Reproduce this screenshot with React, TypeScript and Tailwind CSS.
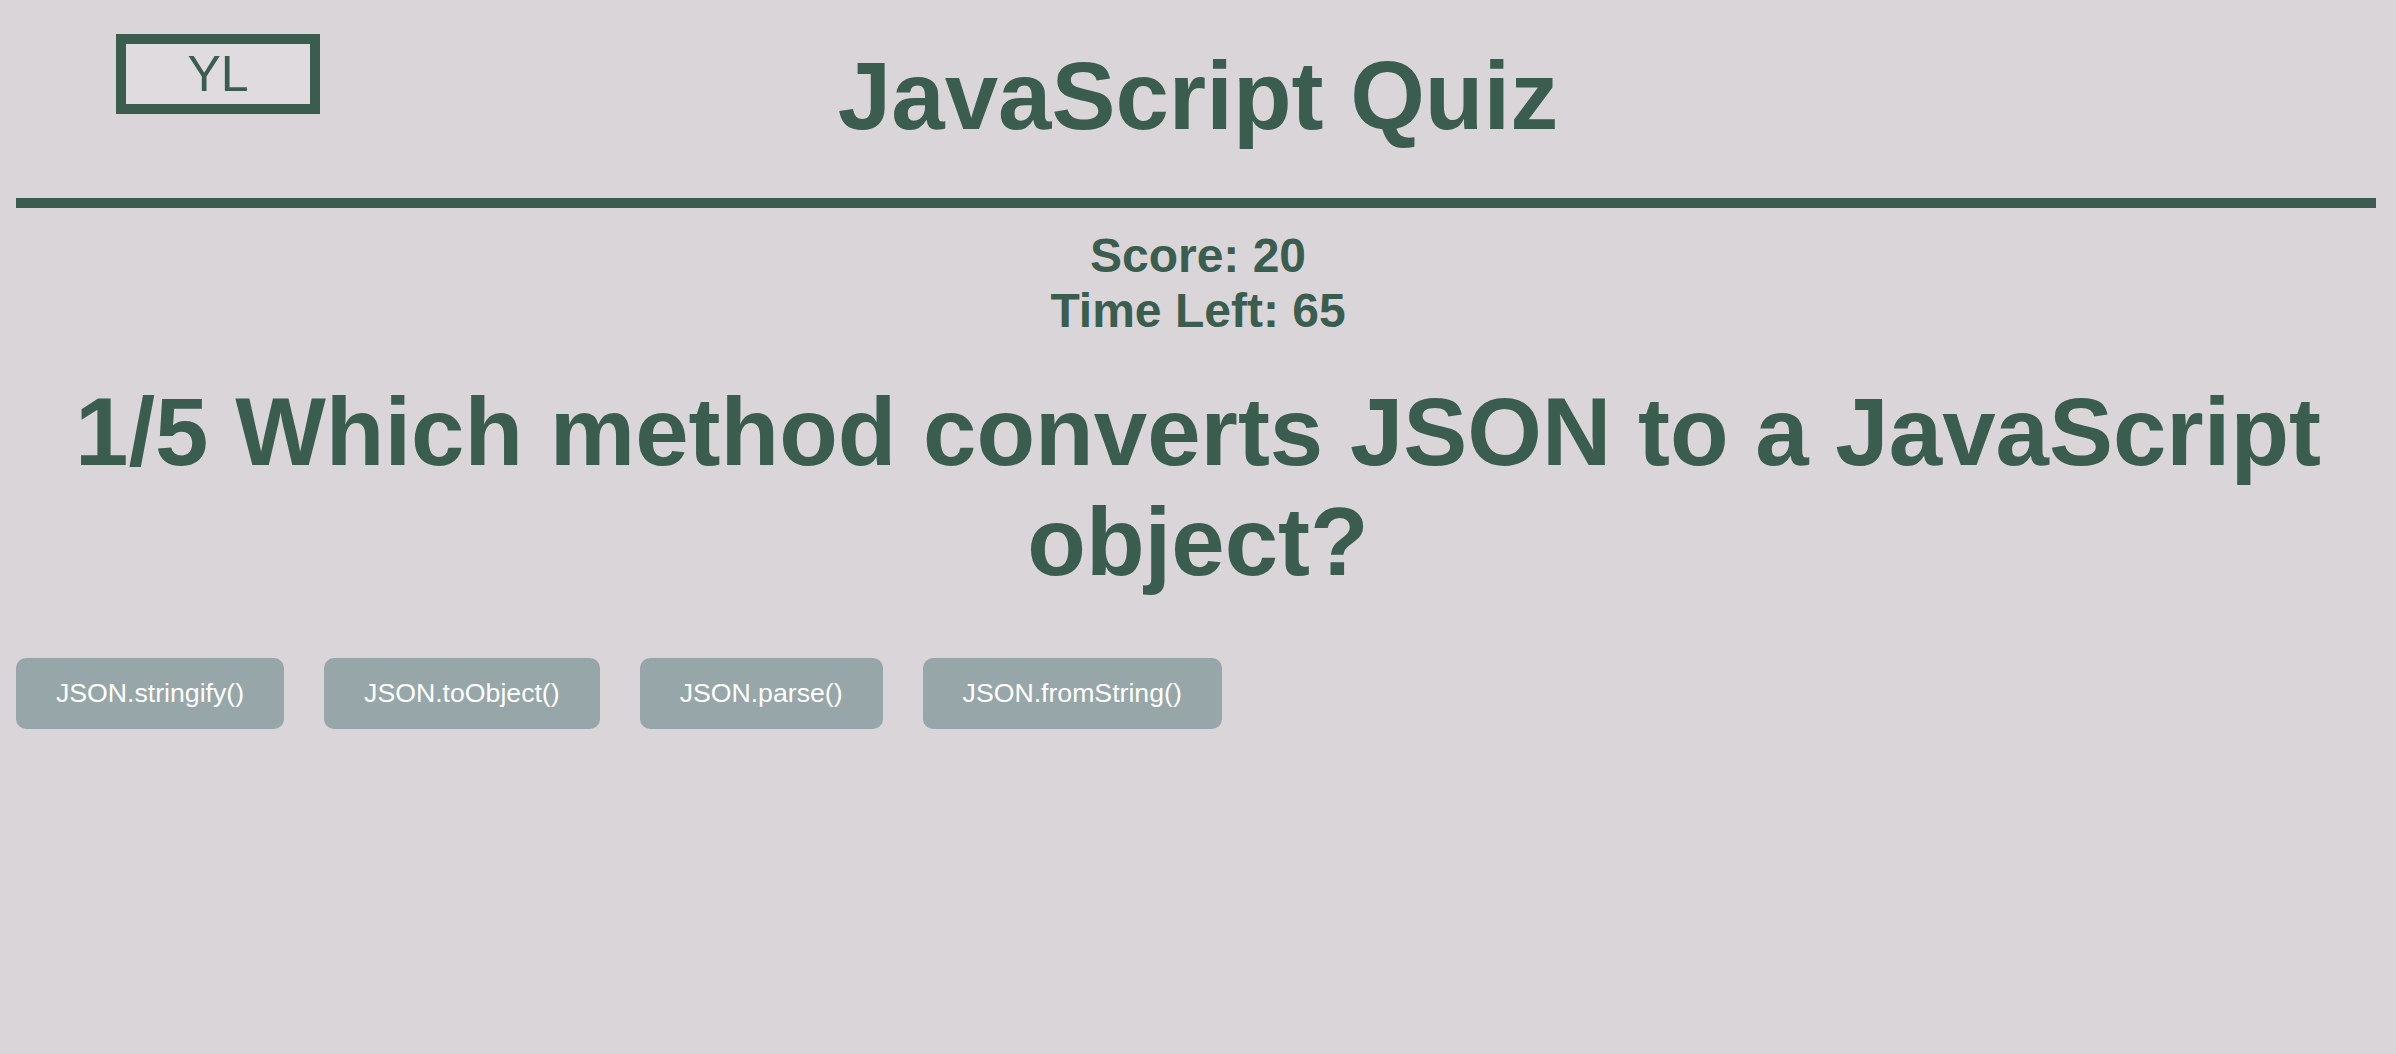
import { useState } from 'react';

const answers = ['JSON.stringify()', 'JSON.toObject()', 'JSON.parse()', 'JSON.fromString()'];

export default function App() {
  const [selected, setSelected] = useState<string | null>(null);

  return (
    <div
      className="min-h-screen bg-[#dad5d9] px-4 text-[#3a5d4f]"
      style={{ fontFamily: '"Liberation Sans", Arial, sans-serif' }}
    >
      <header className="grid grid-cols-[1fr_auto_1fr] items-start">
        <div className="mt-[34px] ml-[100px] flex h-[80px] w-[204px] items-center justify-center border-[10px] border-[#3a5d4f] bg-[#dfdbde]">
          <span className="text-[50px] leading-none">YL</span>
        </div>
        <h1 className="mt-[41px] text-center text-[96px] font-bold leading-[110px]">JavaScript Quiz</h1>
        <div />
      </header>

      <div className="mt-[47px] mr-1 h-[10px] bg-[#3a5d4f]" />

      <div className="mt-[20px] text-center text-[48px] font-bold leading-[55px]">
        <p>Score: 20</p>
        <p>Time Left: 65</p>
      </div>

      <h2 className="mt-[39px] text-center text-[96px] font-bold leading-[110px]">
        1/5 Which method converts JSON to a JavaScript object?
      </h2>

      <div className="mt-[61px] flex gap-10">
        {answers.map((a) => (
          <button
            key={a}
            onClick={() => setSelected(a)}
            className={
              'rounded-[10px] px-10 py-5 text-[26.67px] leading-[31px] text-white ' +
              (selected === a ? 'bg-[#7f8f91]' : 'bg-[#97a6a8]')
            }
          >
            {a}
          </button>
        ))}
      </div>
    </div>
  );
}
